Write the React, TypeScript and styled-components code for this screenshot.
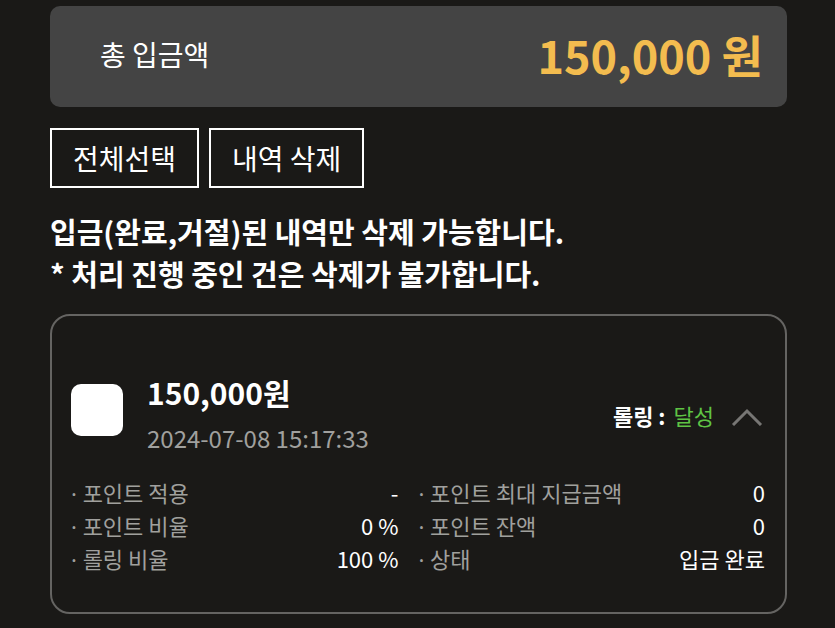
import React from "react";
import styled, { createGlobalStyle } from "styled-components";

const GlobalStyle = createGlobalStyle`
  * { box-sizing: border-box; }
  body {
    margin: 0;
    background: #1a1917;
    color: #fff;
    font-family: "Noto Sans CJK KR", sans-serif;
  }
  button, input { font: inherit; color: inherit; }
`;

const Page = styled.main`
  padding: 6px 48px 14px 50px;
`;

const Summary = styled.section`
  display: flex;
  align-items: center;
  justify-content: space-between;
  padding: 17px 24px 20px 50px;
  border-radius: 10px;
  background: #444;
`;

const SummaryLabel = styled.span`
  padding-bottom: 2px;
  font-size: 28px;
  line-height: 40px;
`;

const SummaryAmount = styled.strong`
  font-size: 45px;
  line-height: 64px;
  font-weight: 700;
  color: #f3bc4f;
`;

const Actions = styled.div`
  display: flex;
  gap: 10px;
  margin-top: 21px;
`;

const ActionButton = styled.button`
  height: 60px;
  padding: 0 21px;
  border: 2px solid #fff;
  border-radius: 0;
  background: transparent;
  font-size: 28px;
  line-height: 40px;
  cursor: pointer;
`;

const Notice = styled.p`
  margin: 22px 0 20px;
  font-size: 29px;
  line-height: 42px;
  font-weight: 700;
`;

const Card = styled.article`
  padding: 53px 20px 37px 19px;
  border: 2px solid #656462;
  border-radius: 20px;
`;

const CardHeader = styled.header`
  display: flex;
  align-items: center;
  padding-right: 2px;
`;

const Check = styled.input`
  appearance: none;
  width: 52px;
  height: 52px;
  margin: 0 24px 10px 0;
  border-radius: 10px;
  background: #fff;
  &:checked { background: #67c84d; }
`;

const Deposit = styled.label`
  flex: 1;
  display: flex;
  flex-direction: column;
`;

const DepositAmount = styled.strong`
  font-size: 30px;
  line-height: 46px;
`;

const DepositTime = styled.time`
  font-size: 24px;
  line-height: 46px;
  color: #a0a09e;
`;

const Rolling = styled.span`
  display: flex;
  gap: 8px;
  font-size: 22px;
  line-height: 32px;
  font-weight: 700;
`;

const Achieved = styled.span`
  font-weight: 400;
  color: #5fc344;
`;

const Toggle = styled.button`
  display: flex;
  margin-left: 17px;
  padding: 0;
  border: 0;
  background: none;
  cursor: pointer;
`;

const Details = styled.dl`
  display: grid;
  grid-template-columns: 327fr 346fr;
  column-gap: 20px;
  margin: 15px 0 0;
`;

const Detail = styled.div`
  display: flex;
  justify-content: space-between;
  font-size: 22px;
  line-height: 33px;
`;

const Term = styled.dt`
  color: #a0a09e;
`;

const Bullet = styled.span`
  font-family: "Noto Sans", sans-serif;
  line-height: 1;
`;

const Value = styled.dd`
  margin: 0;
`;

const details = [
  ["포인트 적용", "-"],
  ["포인트 최대 지급금액", "0"],
  ["포인트 비율", "0 %"],
  ["포인트 잔액", "0"],
  ["롤링 비율", "100 %"],
  ["상태", "입금 완료"],
];

export default function App() {
  return (
    <>
      <GlobalStyle />
      <Page>
        <Summary>
          <SummaryLabel>총 입금액</SummaryLabel>
          <SummaryAmount>150,000 원</SummaryAmount>
        </Summary>
        <Actions>
          <ActionButton type="button">전체선택</ActionButton>
          <ActionButton type="button">내역 삭제</ActionButton>
        </Actions>
        <Notice>
          입금(완료,거절)된 내역만 삭제 가능합니다.
          <br />* 처리 진행 중인 건은 삭제가 불가합니다.
        </Notice>
        <Card>
          <CardHeader>
            <Check type="checkbox" id="deposit" />
            <Deposit htmlFor="deposit">
              <DepositAmount>150,000원</DepositAmount>
              <DepositTime dateTime="2024-07-08T15:17:33">2024-07-08 15:17:33</DepositTime>
            </Deposit>
            <Rolling>
              <span>롤링 :</span>
              <Achieved>달성</Achieved>
            </Rolling>
            <Toggle type="button" aria-label="접기" aria-expanded="true">
              <svg width="32" height="22" viewBox="0 0 32 22" fill="none" stroke="#777674" strokeWidth="3">
                <path d="M2 21 16 7l14 14" />
              </svg>
            </Toggle>
          </CardHeader>
          <Details>
            {details.map(([term, value]) => (
              <Detail key={term}>
                <Term>
                  <Bullet>· </Bullet>
                  {term}
                </Term>
                <Value>{value}</Value>
              </Detail>
            ))}
          </Details>
        </Card>
      </Page>
    </>
  );
}
